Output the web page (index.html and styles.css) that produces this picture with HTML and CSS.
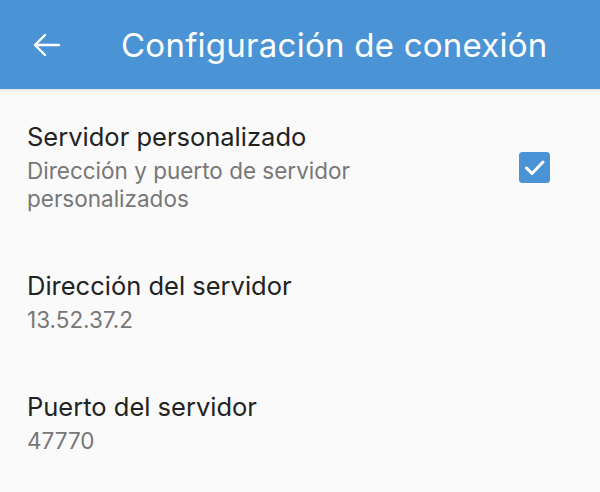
FILE: index.html
```html
<!DOCTYPE html>
<html lang="es">
<head>
<meta charset="utf-8">
<title>Configuración de conexión</title>
<link rel="stylesheet" href="styles.css">
</head>
<body>
<header class="appbar">
  <button class="back" aria-label="Atrás">
    <svg width="28" height="24" viewBox="0 0 28 24" fill="none" stroke="#fff" stroke-width="2.4" stroke-linecap="round" stroke-linejoin="round">
      <path d="M26 12H3M12 2L2 12l10 10"/>
    </svg>
  </button>
  <h1 class="title">Configuración de conexión</h1>
</header>
<main class="list">
  <div class="item item-check">
    <div class="texts">
      <div class="item-title">Servidor personalizado</div>
      <div class="item-sub">Dirección y puerto de servidor<br>personalizados</div>
    </div>
    <div class="checkbox">
      <svg width="31" height="31" viewBox="0 0 31 31">
        <rect width="31" height="31" rx="3.5" fill="#4a94d6"/>
        <path d="M7.5 16l5.5 5.5L24 10" fill="none" stroke="#fff" stroke-width="3" stroke-linecap="round" stroke-linejoin="round"/>
      </svg>
    </div>
  </div>
  <div class="item">
    <div class="texts">
      <div class="item-title">Dirección del servidor</div>
      <div class="item-sub">13.52.37.2</div>
    </div>
  </div>
  <div class="item">
    <div class="texts">
      <div class="item-title">Puerto del servidor</div>
      <div class="item-sub">47770</div>
    </div>
  </div>
</main>
</body>
</html>
```
FILE: styles.css
```css
* { box-sizing: border-box; }
html, body {
  margin: 0;
  padding: 0;
}
body {
  width: 600px;
  height: 492px;
  overflow: hidden;
  background: #fafafa;
  font-family: Inter, Roboto, sans-serif;
}
.appbar {
  height: 89px;
  background: #4a94d6;
  display: flex;
  align-items: center;
  box-shadow: 0 1px 3px rgba(0,0,0,0.12);
  position: relative;
}
.back {
  width: 28px;
  height: 24px;
  margin-left: 33px;
  padding: 0;
  border: 0;
  background: none;
  display: flex;
}
.title {
  margin: 0 0 0 60px;
  color: #fff;
  font-size: 33px;
  font-weight: 400;
  letter-spacing: 0.25px;
  line-height: 38px;
}
.list {
  display: flex;
  flex-direction: column;
}
.item {
  display: flex;
  align-items: center;
  padding: 32px 50px 25px 27px;
}
.texts {
  flex: 1;
}
.item-title {
  font-size: 25.5px;
  line-height: 32px;
  color: #222;
}
.item-sub {
  margin-top: 4px;
  font-size: 22.5px;
  line-height: 28px;
  color: #777;
}
.checkbox {
  width: 31px;
  height: 31px;
  display: flex;
}
```
